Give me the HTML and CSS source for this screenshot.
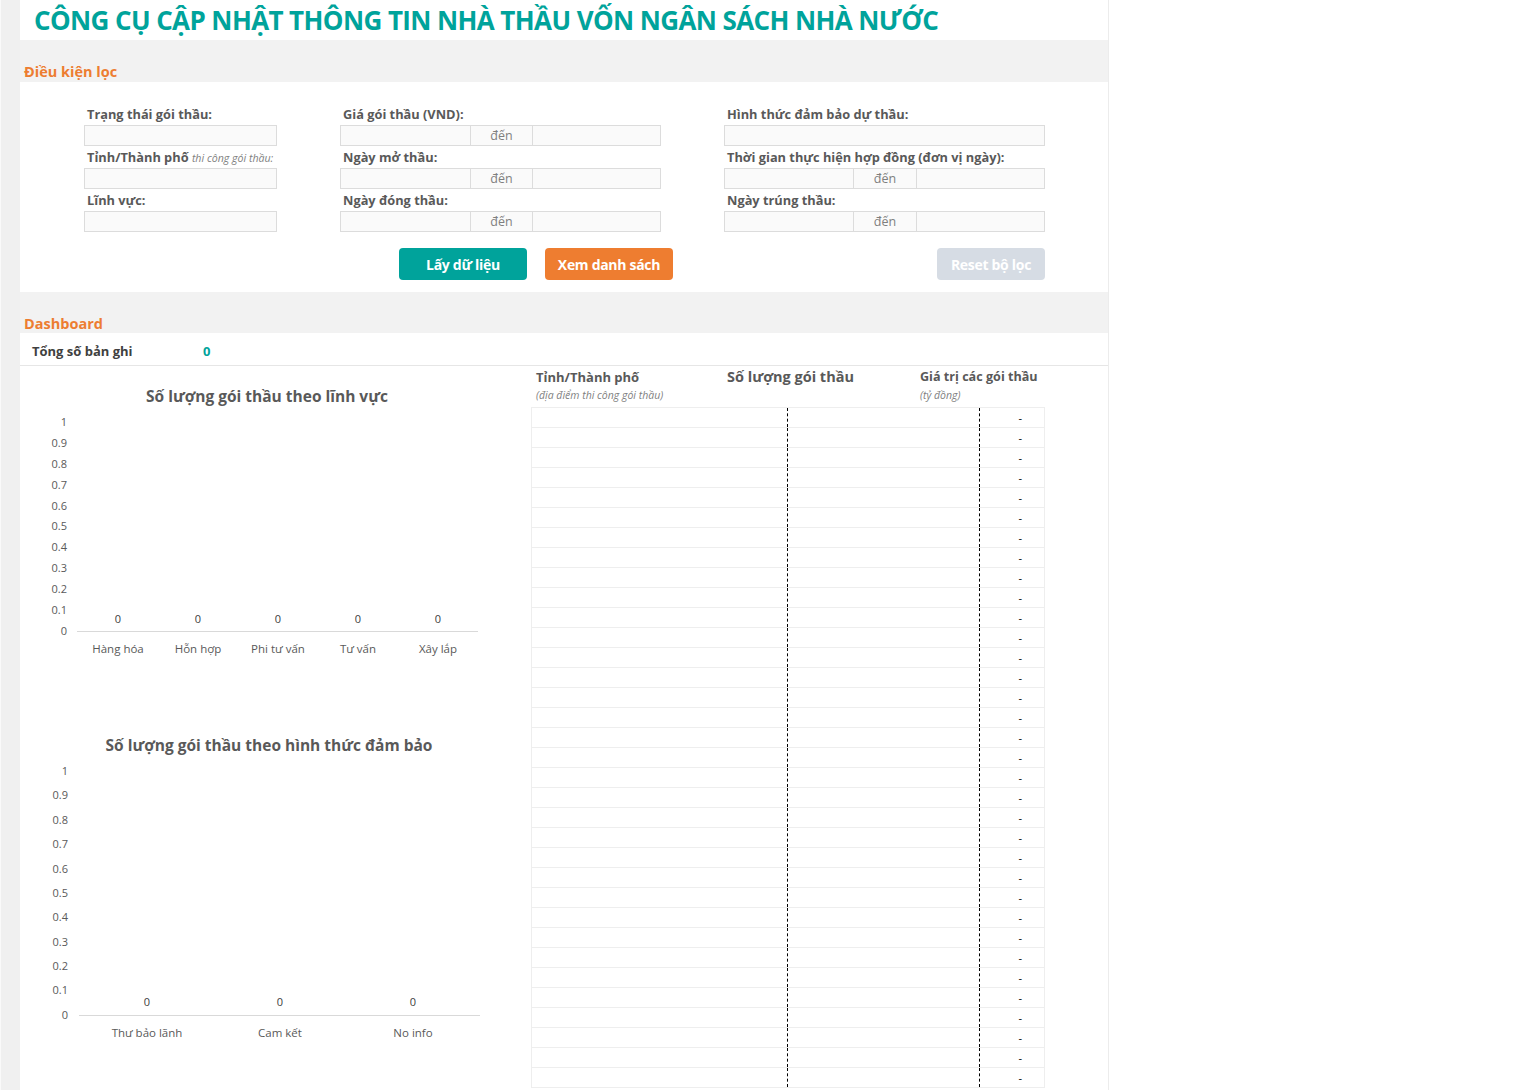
FILE: index.html
```html
<!DOCTYPE html>
<html lang="vi">
<head>
<meta charset="utf-8">
<title>Công cụ cập nhật thông tin nhà thầu</title>
<link rel="stylesheet" href="styles.css">
</head>
<body>
<div class="page">
  <div class="gutter"></div>
  <div class="sheet">
    <div class="title-bar"><h1 class="title">CÔNG CỤ CẬP NHẬT THÔNG TIN NHÀ THẦU VỐN NGÂN SÁCH NHÀ NƯỚC</h1></div>
    <div class="band"><span class="band-title">Điều kiện lọc</span></div>
    <div class="filters">
      <div class="filter-grid">
        <div class="fcol">
          <div class="field-label">Trạng thái gói thầu:</div>
          <div class="input"></div>
          <div class="field-label">Tỉnh/Thành phố <em class="hint">thi công gói thầu:</em></div>
          <div class="input"></div>
          <div class="field-label">Lĩnh vực:</div>
          <div class="input"></div>
        </div>
        <div class="fcol">
          <div class="field-label">Giá gói thầu (VND):</div>
          <div class="range"><div class="seg"></div><div class="seg mid">đến</div><div class="seg"></div></div>
          <div class="field-label">Ngày mở thầu:</div>
          <div class="range"><div class="seg"></div><div class="seg mid">đến</div><div class="seg"></div></div>
          <div class="field-label">Ngày đóng thầu:</div>
          <div class="range"><div class="seg"></div><div class="seg mid">đến</div><div class="seg"></div></div>
        </div>
        <div class="fcol">
          <div class="field-label">Hình thức đảm bảo dự thầu:</div>
          <div class="input"></div>
          <div class="field-label">Thời gian thực hiện hợp đồng (đơn vị ngày):</div>
          <div class="range r3"><div class="seg"></div><div class="seg mid">đến</div><div class="seg"></div></div>
          <div class="field-label">Ngày trúng thầu:</div>
          <div class="range r3"><div class="seg"></div><div class="seg mid">đến</div><div class="seg"></div></div>
        </div>
      </div>
      <div class="actions">
        <button class="btn btn-teal">Lấy dữ liệu</button>
        <button class="btn btn-orange">Xem danh sách</button>
        <button class="btn btn-reset">Reset bộ lọc</button>
      </div>
    </div>
    <div class="band band-dash"><span class="band-title">Dashboard</span></div>
    <div class="total-row"><span class="total-label">Tổng số bản ghi</span><span class="total-value">0</span></div>
    <div class="dash-body">
      <div class="charts">
        <svg class="chart" width="511" height="334" viewBox="0 0 511 334">
          <text class="ctitle" x="247" y="36" text-anchor="middle">Số lượng gói thầu theo lĩnh vực</text>
          <g class="ax" text-anchor="end">
            <text x="47" y="60">1</text>
            <text x="47" y="81">0.9</text>
            <text x="47" y="102">0.8</text>
            <text x="47" y="123">0.7</text>
            <text x="47" y="144">0.6</text>
            <text x="47" y="164">0.5</text>
            <text x="47" y="185">0.4</text>
            <text x="47" y="206">0.3</text>
            <text x="47" y="227">0.2</text>
            <text x="47" y="248">0.1</text>
            <text x="47" y="269">0</text>
          </g>
          <line class="axis" x1="57" y1="265.5" x2="458" y2="265.5"/>
          <g class="dl" text-anchor="middle">
            <text x="98" y="257">0</text>
            <text x="178" y="257">0</text>
            <text x="258" y="257">0</text>
            <text x="338" y="257">0</text>
            <text x="418" y="257">0</text>
          </g>
          <g class="cat" text-anchor="middle">
            <text x="98" y="287">Hàng hóa</text>
            <text x="178" y="287">Hỗn hợp</text>
            <text x="258" y="287">Phi tư vấn</text>
            <text x="338" y="287">Tư vấn</text>
            <text x="418" y="287">Xây lắp</text>
          </g>
        </svg>
        <svg class="chart" width="511" height="390" viewBox="0 0 511 390">
          <text class="ctitle" x="249" y="51" text-anchor="middle">Số lượng gói thầu theo hình thức đảm bảo</text>
          <g class="ax" text-anchor="end">
            <text x="48" y="75">1</text>
            <text x="48" y="99">0.9</text>
            <text x="48" y="124">0.8</text>
            <text x="48" y="148">0.7</text>
            <text x="48" y="173">0.6</text>
            <text x="48" y="197">0.5</text>
            <text x="48" y="221">0.4</text>
            <text x="48" y="246">0.3</text>
            <text x="48" y="270">0.2</text>
            <text x="48" y="294">0.1</text>
            <text x="48" y="319">0</text>
          </g>
          <line class="axis" x1="59" y1="315.5" x2="460" y2="315.5"/>
          <g class="dl" text-anchor="middle">
            <text x="127" y="306">0</text>
            <text x="260" y="306">0</text>
            <text x="393" y="306">0</text>
          </g>
          <g class="cat" text-anchor="middle">
            <text x="127" y="337">Thư bảo lãnh</text>
            <text x="260" y="337">Cam kết</text>
            <text x="393" y="337">No info</text>
          </g>
        </svg>
      </div>
      <div class="table-area">
        <div class="thead">
          <div class="th th1"><div class="th-main">Tỉnh/Thành phố</div><div class="th-sub">(địa điểm thi công gói thầu)</div></div>
          <div class="th th2"><div class="th-main big">Số lượng gói thầu</div></div>
          <div class="th th3"><div class="th-main">Giá trị các gói thầu</div><div class="th-sub">(tỷ đồng)</div></div>
        </div>
        <div class="tbody">
          <div class="trow"><div class="td c1"></div><div class="td c2"></div><div class="td c3">-</div></div>
          <div class="trow"><div class="td c1"></div><div class="td c2"></div><div class="td c3">-</div></div>
          <div class="trow"><div class="td c1"></div><div class="td c2"></div><div class="td c3">-</div></div>
          <div class="trow"><div class="td c1"></div><div class="td c2"></div><div class="td c3">-</div></div>
          <div class="trow"><div class="td c1"></div><div class="td c2"></div><div class="td c3">-</div></div>
          <div class="trow"><div class="td c1"></div><div class="td c2"></div><div class="td c3">-</div></div>
          <div class="trow"><div class="td c1"></div><div class="td c2"></div><div class="td c3">-</div></div>
          <div class="trow"><div class="td c1"></div><div class="td c2"></div><div class="td c3">-</div></div>
          <div class="trow"><div class="td c1"></div><div class="td c2"></div><div class="td c3">-</div></div>
          <div class="trow"><div class="td c1"></div><div class="td c2"></div><div class="td c3">-</div></div>
          <div class="trow"><div class="td c1"></div><div class="td c2"></div><div class="td c3">-</div></div>
          <div class="trow"><div class="td c1"></div><div class="td c2"></div><div class="td c3">-</div></div>
          <div class="trow"><div class="td c1"></div><div class="td c2"></div><div class="td c3">-</div></div>
          <div class="trow"><div class="td c1"></div><div class="td c2"></div><div class="td c3">-</div></div>
          <div class="trow"><div class="td c1"></div><div class="td c2"></div><div class="td c3">-</div></div>
          <div class="trow"><div class="td c1"></div><div class="td c2"></div><div class="td c3">-</div></div>
          <div class="trow"><div class="td c1"></div><div class="td c2"></div><div class="td c3">-</div></div>
          <div class="trow"><div class="td c1"></div><div class="td c2"></div><div class="td c3">-</div></div>
          <div class="trow"><div class="td c1"></div><div class="td c2"></div><div class="td c3">-</div></div>
          <div class="trow"><div class="td c1"></div><div class="td c2"></div><div class="td c3">-</div></div>
          <div class="trow"><div class="td c1"></div><div class="td c2"></div><div class="td c3">-</div></div>
          <div class="trow"><div class="td c1"></div><div class="td c2"></div><div class="td c3">-</div></div>
          <div class="trow"><div class="td c1"></div><div class="td c2"></div><div class="td c3">-</div></div>
          <div class="trow"><div class="td c1"></div><div class="td c2"></div><div class="td c3">-</div></div>
          <div class="trow"><div class="td c1"></div><div class="td c2"></div><div class="td c3">-</div></div>
          <div class="trow"><div class="td c1"></div><div class="td c2"></div><div class="td c3">-</div></div>
          <div class="trow"><div class="td c1"></div><div class="td c2"></div><div class="td c3">-</div></div>
          <div class="trow"><div class="td c1"></div><div class="td c2"></div><div class="td c3">-</div></div>
          <div class="trow"><div class="td c1"></div><div class="td c2"></div><div class="td c3">-</div></div>
          <div class="trow"><div class="td c1"></div><div class="td c2"></div><div class="td c3">-</div></div>
          <div class="trow"><div class="td c1"></div><div class="td c2"></div><div class="td c3">-</div></div>
          <div class="trow"><div class="td c1"></div><div class="td c2"></div><div class="td c3">-</div></div>
          <div class="trow"><div class="td c1"></div><div class="td c2"></div><div class="td c3">-</div></div>
          <div class="trow"><div class="td c1"></div><div class="td c2"></div><div class="td c3">-</div></div>
        </div>
      </div>
    </div>
  </div>
</div>
</body>
</html>
```

FILE: styles.css
```css
* { box-sizing: border-box; margin: 0; padding: 0; }
html, body { background: #fff; }
body {
  margin: 0;
  font-family: "Open Sans", "DejaVu Sans", sans-serif;
  color: #595959;
  overflow: hidden;
}
.page { display: flex; min-height: 1090px; }
.gutter { width: 20px; flex: none; background: #f0f0f0; border-left: 1px solid #fafafa; }
.sheet { width: 1089px; flex: none; border-right: 1px solid #ececec; }

.title-bar { height: 40px; padding-left: 14px; display: flex; align-items: center; }
.title { font-size: 26px; font-weight: 700; color: #00a39b; white-space: nowrap; letter-spacing: -0.6px; line-height: 40px; }

.band { height: 42px; background: #f2f2f2; display: flex; align-items: flex-end; padding: 0 0 0 4px; }
.band-dash { height: 41px; }
.band-title { color: #ed7d31; font-weight: 700; font-size: 14.5px; line-height: 20px; }
.band-dash .band-title { line-height: 18px; }

.filters { height: 210px; padding: 23px 0 0 64px; }
.filter-grid { display: grid; grid-template-columns: 193px 321px 321px; column-gap: 63px; }
.fcol { display: flex; flex-direction: column; }
.field-label { height: 22px; line-height: 22px; padding-left: 3px; font-size: 12.8px; font-weight: 700; white-space: nowrap; color: #595959; }
.fcol .field-label:first-child { height: 20px; line-height: 18px; }
.hint { font-weight: 400; font-size: 10.6px; color: #7f7f7f; }
.input { height: 21px; border: 1px solid #dcdcdc; background: #fafafa; }
.range { height: 21px; display: grid; grid-template-columns: 129px 63px 1fr; border: 1px solid #dcdcdc; background: #fafafa; }
.range.r3 { grid-template-columns: 128px 64px 1fr; }
.seg { height: 19px; }
.seg.mid { border-left: 1px solid #dcdcdc; border-right: 1px solid #dcdcdc; text-align: center; font-size: 12.5px; line-height: 19px; color: #7f7f7f; }

.actions { display: flex; gap: 18px; margin: 16px 63px 0 315px; }
.btn { width: 128px; height: 32px; border: none; border-radius: 4px; color: #fff; font-family: inherit; font-weight: 700; font-size: 14px; letter-spacing: -0.3px; }
.btn-teal { background: #00a39b; }
.btn-orange { background: #ee7d30; }
.btn-reset { background: #d6dce4; width: 108px; margin-left: auto; }

.total-row { height: 33px; border-bottom: 1px solid #e6e6e6; display: flex; align-items: center; padding: 3px 0 0 12px; }
.total-label { width: 171px; font-size: 13px; font-weight: 700; color: #404040; }
.total-value { font-size: 13px; font-weight: 700; color: #00a39b; }

.dash-body { display: flex; }
.charts { width: 511px; flex: none; display: flex; flex-direction: column; }
.chart { display: block; }
.ctitle { font-size: 15.5px; font-weight: 700; fill: #595959; }
.ax { font-size: 11px; fill: #595959; }
.dl { font-size: 11px; fill: #404040; }
.cat { font-size: 11.5px; fill: #595959; }
.axis { stroke: #d9d9d9; stroke-width: 1; }

.table-area { width: 514px; flex: none; }
.thead { height: 41px; display: flex; }
.th { padding-top: 2px; }
.th1 { width: 196px; padding-left: 5px; }
.th2 { width: 193px; }
.th3 { flex: 1; }
.th-main { font-size: 13px; font-weight: 700; line-height: 18px; color: #595959; white-space: nowrap; }
.th-main.big { font-size: 14.5px; }
.th-sub { font-size: 10.5px; font-style: italic; line-height: 17px; padding-top: 1px; color: #7f7f7f; white-space: nowrap; }
.th3 .th-main { font-size: 12.6px; }

.tbody { border: 1px solid #eeeeee; border-bottom: none; }
.trow { display: grid; grid-template-columns: 256px 192px 1fr; height: 20px; border-bottom: 1px solid #eeeeee; }
.td { height: 19px; }
.c1, .c2 { border-right: 1px dashed #000; }
.c3 { text-align: right; padding-right: 22px; font-size: 11px; line-height: 19px; color: #000; }
```
